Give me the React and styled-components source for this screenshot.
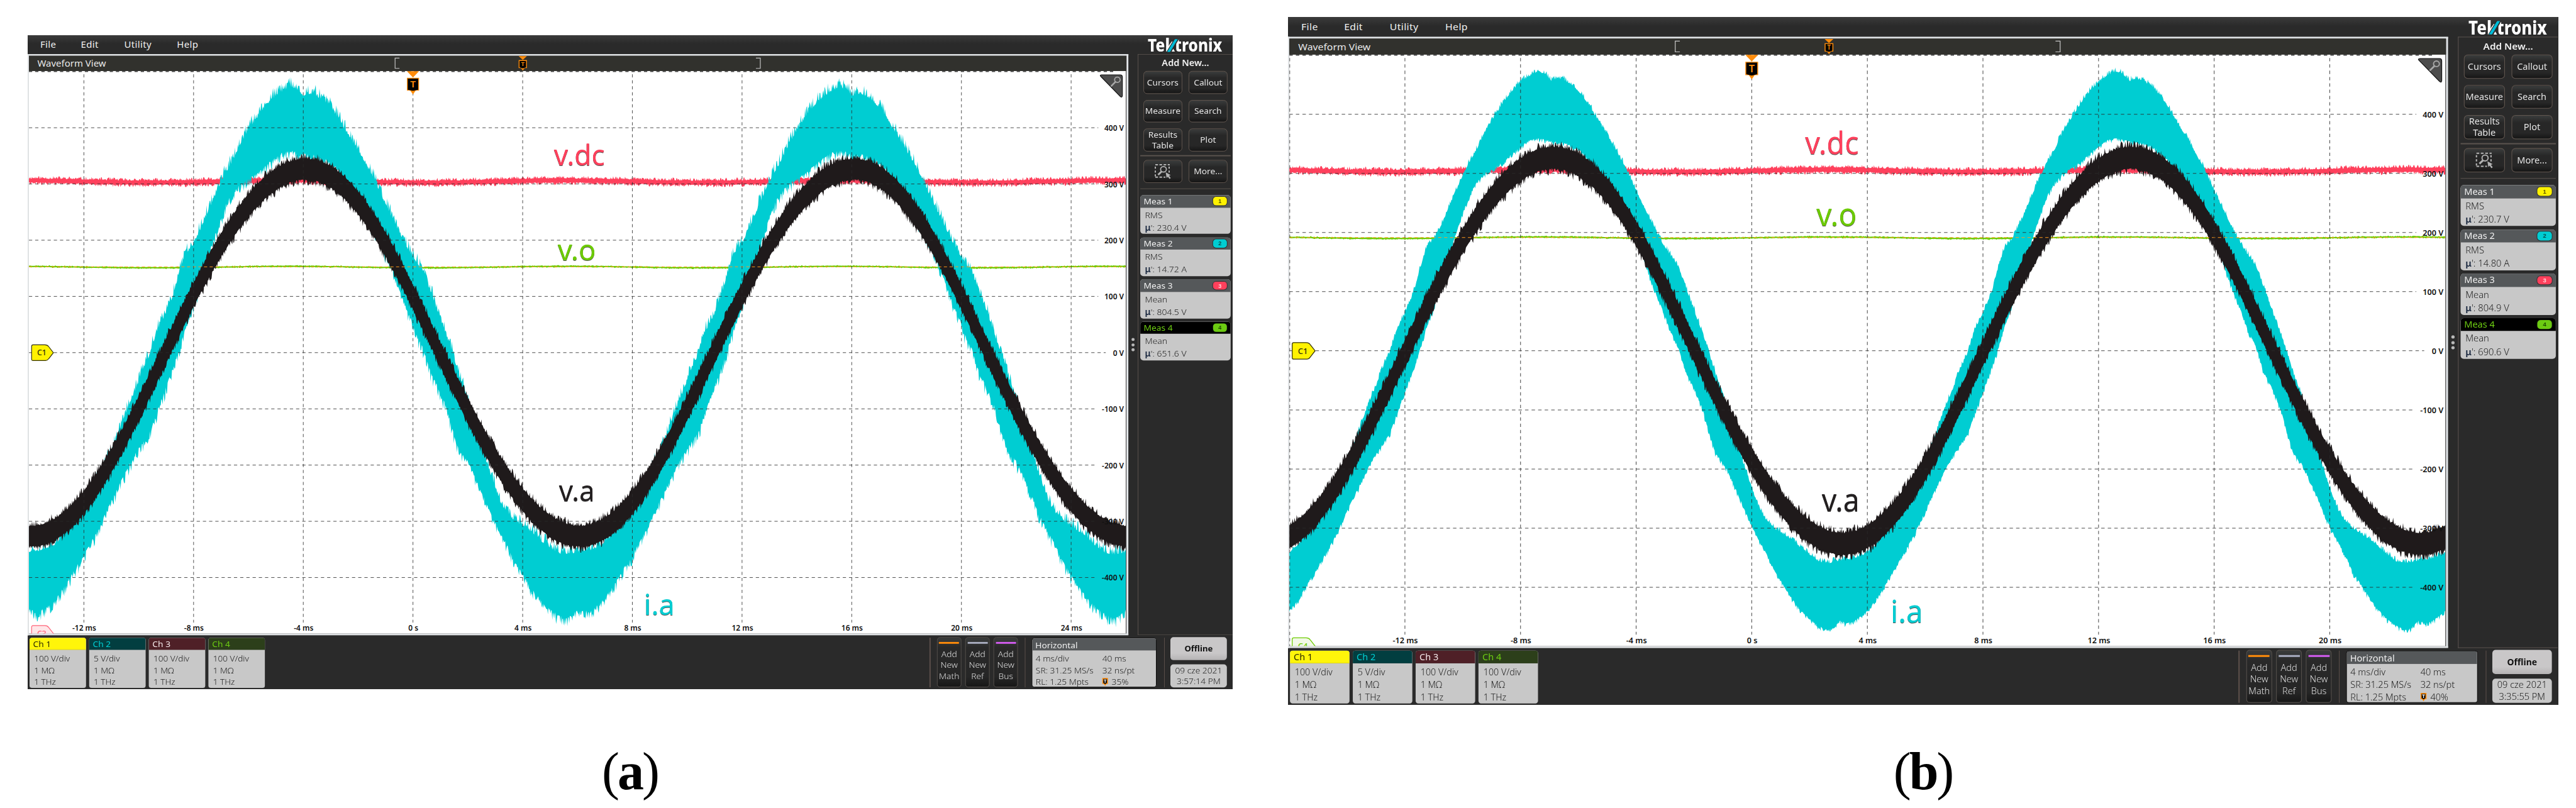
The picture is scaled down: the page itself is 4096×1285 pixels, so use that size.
import { useMemo } from 'react';
import styled, { createGlobalStyle } from 'styled-components';

const GlobalStyle = createGlobalStyle`
    * {
        box-sizing: border-box;
    }
    body {
        margin: 0;
        background: #fff;
        font-family: 'Noto Sans', 'Open Sans', sans-serif;
    }
`;

const Page = styled.main`
    display: flex;
    width: 4096px;
    height: 1285px;
    padding-left: 43.6px;
    gap: 88.6px;
    overflow: hidden;
    background: #fff;
`;

const Figure = styled.figure`
    display: flex;
    flex-direction: column;
    width: ${(p) => 1920 * p.$sx}px;
    margin: 0;
    padding-top: ${(p) => p.$top}px;
    padding-bottom: 12px;
`;

const Caption = styled.figcaption`
    margin-top: auto;
    font-family: 'Liberation Serif', serif;
    font-size: 84px;
    line-height: 92px;
    letter-spacing: -3px;
    text-align: center;
    color: #000;
`;

const ScreenBox = styled.div`
    width: ${(p) => 1920 * p.$sx}px;
    height: ${(p) => 1080 * p.$sy}px;
`;

/* the instrument screen is laid out at its own 1920x1080 */
const Screen = styled.div`
    display: flex;
    flex-direction: column;
    width: 1920px;
    height: 1080px;
    transform: scale(${(p) => p.$sx}, ${(p) => p.$sy});
    transform-origin: 0 0;
    background: #2a2a2a;
    color: #e6e6e6;
    font-size: 13.8px;
    line-height: 18px;
    white-space: nowrap;
`;

const MenuBar = styled.header`
    display: flex;
    justify-content: space-between;
    height: 31px;
    padding: 0 14px 0 20px;
    background: linear-gradient(#3b3b3b, #2a2a2a 14px);
`;

const Menu = styled.nav`
    display: flex;
    font-size: 15px;
    line-height: 31px;
    letter-spacing: 0.35px;
    color: #f0f0f0;
`;

const MenuItem = styled.span`
    width: ${(p) => p.$width}px;
`;

const Logo = styled.svg`
    width: 122px;
    height: 31px;
    overflow: visible;
`;

const Middle = styled.div`
    display: flex;
    height: 960px;
`;

const View = styled.section`
    display: flex;
    flex-direction: column;
    width: 1754px;
    border-top: 3.5px solid #dfe2e4;
    border-left: 2.5px solid #dfe2e4;
    border-right: 3.5px solid #e4e7ea;
    border-bottom: 3px solid #dfe2e4;
`;

const ViewHeader = styled.div`
    position: relative;
    height: 24.5px;
    padding-left: 13.5px;
    background: #31312d;
    font-size: 15px;
    line-height: 25px;
    color: #e8e8e8;
`;

const HeaderMarks = styled.svg`
    position: absolute;
    inset: 0;
    width: 1748px;
    height: 24.5px;
`;

const Plot = styled.svg`
    display: block;
    width: 1748px;
    height: 929px;
    background: #fff;
`;

const TraceLabel = styled.text`
    font-size: 48px;
    fill: ${(p) => p.$color};
    filter: drop-shadow(0.6px 1.3px 0 rgba(40, 40, 40, 0.8));
`;

const Grip = styled.div`
    display: flex;
    flex-direction: column;
    align-items: center;
    justify-content: center;
    gap: 3.4px;
    width: 15px;
    height: 960px;
`;

const Dot = styled.i`
    width: 5px;
    height: 5px;
    border-radius: 50%;
    background: #b9b9b9;
`;

const SideBar = styled.aside`
    display: flex;
    flex-direction: column;
    width: 151px;
    padding: 4px 3px 0;
    border: 1px solid #5b534f;
    border-right: none;
`;

const SideTitle = styled.div`
    height: 23px;
    font-size: 14.6px;
    font-weight: 600;
    line-height: 18px;
    text-align: center;
    color: #f2f2f2;
`;

const ButtonGrid = styled.div`
    display: grid;
    grid-template-columns: 62.6px 62.6px;
    gap: 10.2px 9.5px;
    padding: 0 4.6px;
    margin-bottom: ${(p) => p.$after}px;
`;

const Button = styled.button`
    display: flex;
    align-items: center;
    justify-content: center;
    height: 37.5px;
    padding: 0;
    border: 1.2px solid #61564f;
    border-radius: 6px;
    background: linear-gradient(#3a3c3c, #272727 30%, #272727 75%, #161616);
    font: inherit;
    line-height: 18.4px;
    color: #e4e4e4;
`;

const Rule = styled.hr`
    width: 144px;
    height: 1.2px;
    margin: 0 0 ${(p) => p.$after}px;
    border: none;
    background: #5b534f;
`;

const MeasCard = styled.div`
    width: 144px;
    height: 64.5px;
    margin-bottom: 5.1px;
    border-radius: 5px;
    background: #c8c8c8;
    color: #222;
    overflow: hidden;
`;

const MeasHead = styled.div`
    display: flex;
    align-items: center;
    justify-content: space-between;
    height: 20.7px;
    padding: 0 6px 0 5.5px;
    background: ${(p) => (p.$active ? '#000' : '#55585a')};
    color: ${(p) => (p.$active ? '#6ccb12' : '#f0f0f0')};
`;

const Badge = styled.span`
    width: 22px;
    height: 13.6px;
    border-radius: 5px;
    box-shadow: 0 0 0 1px rgba(20, 20, 20, 0.55);
    background: ${(p) => p.$color};
    color: ${(p) => p.$ink};
    font-family: 'Liberation Sans', sans-serif;
    font-size: 9px;
    font-weight: 700;
    line-height: 14px;
    text-align: center;
`;

const MeasLine = styled.div`
    height: 21px;
    padding-left: 7.4px;
    font-size: 14px;
    font-weight: 300;
    line-height: 24px;
`;

const Mu = styled.span`
    font-weight: 600;
    color: #16243c;
`;

const BottomBar = styled.footer`
    display: flex;
    height: 89px;
    padding: 3.6px 9px 0 2.6px;
`;

const Spacer = styled.div`
    flex: ${(p) => (p.$width ? `0 0 ${p.$width}px` : '1')};
`;

const ChannelCard = styled.div`
    width: 90px;
    height: 83.5px;
    margin-right: 5.1px;
    border-radius: 4px;
    background: #c8c8c8;
    color: #222;
    font-size: 13.6px;
    font-weight: 300;
    overflow: hidden;
`;

const ChannelHead = styled.div`
    height: 20px;
    margin-bottom: 4.5px;
    padding-left: 6px;
    border-bottom: 1px solid rgba(0, 0, 0, 0.12);
    background: ${(p) => p.$bg};
    color: ${(p) => p.$color};
    font-size: 13.8px;
    font-weight: 400;
    line-height: 20.5px;
`;

const ChannelLine = styled.div`
    height: 19.6px;
    padding-left: 7.6px;
    line-height: 19.6px;
`;

const Separator = styled.div`
    width: 1.2px;
    height: 82px;
    margin-right: ${(p) => p.$after}px;
    background: #5b4f4a;
`;

const AddButton = styled.button`
    display: flex;
    flex-direction: column;
    align-items: center;
    justify-content: flex-start;
    width: 39.4px;
    height: 83px;
    margin: -0.8px 5.7px 0 0;
    padding: 7.6px 0 0;
    border: 1.2px solid #55504c;
    border-radius: 5px;
    background: linear-gradient(#3a3c3c, #292929 20%, #262626 80%, #171717);
    font: inherit;
    font-weight: 300;
    line-height: 17.9px;
    color: #dedede;
`;

const ColorBar = styled.i`
    width: 32px;
    height: 2.4px;
    margin-bottom: 8.2px;
    background: ${(p) => p.$color};
`;

const HorizontalCard = styled.div`
    width: 199px;
    height: 82.5px;
    margin-right: 12px;
    border: 1px solid #0c0c0c;
    border-radius: 4px;
    background: #c8c8c8;
    color: #222;
    font-weight: 300;
    overflow: hidden;
`;

const HorizontalHead = styled.div`
    height: 20.5px;
    margin-bottom: 3px;
    padding-left: 5px;
    background: #55585a;
    color: #eee;
    font-weight: 400;
    line-height: 21px;
`;

const HorizontalGrid = styled.div`
    display: grid;
    grid-template-columns: 106px auto;
    grid-auto-rows: 19.6px;
    padding-left: 5.6px;
    line-height: 19.6px;
`;

const TriggerCell = styled.span`
    display: flex;
    align-items: center;
    gap: 5px;
`;

const Status = styled.div`
    display: flex;
    flex-direction: column;
    justify-content: space-between;
    width: 90px;
    height: 83px;
    margin-top: -0.4px;
    text-align: center;
    color: #222;
`;

const Offline = styled.div`
    height: 37.4px;
    border-radius: 5px;
    background: linear-gradient(#c9c7c8 70%, #b5b3b4);
    font-size: 13.2px;
    font-weight: 700;
    line-height: 38px;
    color: #111;
`;

const Clock = styled.div`
    height: 37.8px;
    padding-top: 1px;
    border-radius: 5px;
    background: #c8c8c8;
    font-weight: 300;
    line-height: 17.8px;
`;

// envelope of the inductor current over one positive half wave, [x, y]
const OUTER = [
    [218, 402], [229, 374], [240, 332], [248.5, 304], [262, 287], [272, 265.5], [282, 241],
    [291.6, 218], [301.5, 194], [311.4, 173], [324.7, 149], [338, 119], [351, 97.8],
    [364.4, 76], [377.7, 57.6], [391, 44], [404, 34], [417.4, 27], [427, 31], [437, 42],
    [447, 38], [457, 41], [470.4, 50], [483.6, 64], [497, 85], [510, 108], [523.4, 130],
    [536.6, 154], [550, 179], [563, 209.6], [576.4, 238], [589.6, 266], [603, 293.4],
    [616, 314.4], [629.3, 334], [639.3, 363], [649.2, 392], [655, 405],
];
const INNER = [
    [218, 522], [225, 503], [238.6, 462], [248.5, 427], [258.5, 400], [275, 343], [290, 290],
    [304.8, 244.5], [314.7, 217], [324.7, 200], [338, 185], [351, 177], [364.4, 168],
    [377.7, 155], [391, 144], [404, 134], [417.4, 131], [430.6, 134], [444, 137], [457, 138],
    [477, 147], [490, 159], [510, 185], [530, 225], [550, 262], [575, 315], [590, 360],
    [599.5, 386], [609.5, 410], [616, 431], [629.3, 460], [640, 497], [655, 528],
];
const HALF = 437;
const MID = 465.2;

const lookup = (table, x) => {
    let i = 1;
    while (i < table.length - 1 && table[i][0] < x) i += 1;
    const [x0, y0] = table[i - 1];
    const [x1, y1] = table[i];
    return y0 + ((y1 - y0) * (x - x0)) / (x1 - x0);
};

const currentBand = (x, peak) => {
    const shifted = x - peak + 437 - 218;
    const n = Math.floor(shifted / HALF);
    const u = shifted - n * HALF + 218;
    const outer = lookup(OUTER, u);
    const inner = lookup(INNER, u);
    return n % 2 === 0 ? [outer, inner] : [930.4 - inner, 930.4 - outer];
};

// the band gets taller where the wave is steep
const voltageBand = (x, peak) => {
    const a = ((x - peak) * Math.PI) / HALF;
    const y = MID - 303 * Math.cos(a) - 2.5 * Math.sin(3 * a);
    const half = 16.5 + 3 * Math.abs(Math.sin(a));
    return [y - half, y + half];
};

const random = (seed) => {
    let s = seed;
    return () => {
        s = (s * 1664525 + 1013904223) % 4294967296;
        return s / 4294967296;
    };
};

// filled band with ragged edges, one sample per column
const bandPath = (band, amp, seed, power = 2) => {
    const rnd = random(seed);
    const top = [];
    const bottom = [];
    for (let x = 0; x <= 1748; x += 1) {
        const [a, b] = band(x);
        top.push(`${x} ${(a - amp * rnd() ** power).toFixed(1)}`);
        bottom.push(`${x} ${(b + amp * rnd() ** power).toFixed(1)}`);
    }
    return `M${top.join('L')}L${bottom.reverse().join('L')}Z`;
};

const makeTraces = ({ peak, noise, green }) => {
    const ripple = (x) => Math.cos((2 * Math.PI * (x - peak + 20)) / HALF);
    return {
        dc: bandPath((x) => {
            const y = 182.6 - 1.8 * ripple(x);
            return [y - 3, y + 3];
        }, 5, 11),
        out: bandPath((x) => {
            const y = green + 0.4 - 1.2 * ripple(x);
            return [y - 1, y + 1];
        }, 1.2, 23, 3),
        current: bandPath((x) => currentBand(x, peak), noise, 37),
        phase: bandPath((x) => voltageBand(x, peak), 11, 53, 2.4),
    };
};

const scopes = [
    {
        id: 'a', sx: 0.9978, sy: 0.963, top: 55.6, peak: 437, noise: 18, green: 323.5,
        zero: 612, marker: 787, percent: '35%', time: '3:57:14 PM',
        values: ['230.4 V', '14.72 A', '804.5 V', '651.6 V'],
        tag: { text: 'C3', color: '#ff6478', fill: '#ffe6e8' },
        labels: [
            ['v.dc', 836.6, 156, 81, '#ff405c'],
            ['v.o', 842.5, 312.5, 61, '#6ccb00'],
            ['v.a', 844.5, 710.5, 57, '#231f20'],
            ['i.a', 980, 898, 49, '#00cdd2'],
        ],
    },
    {
        id: 'b', sx: 1.0516, sy: 1.0127, top: 27.3, peak: 396, noise: 8, green: 287.3,
        zero: 699.2, marker: 816, percent: '40%', time: '3:35:55 PM',
        values: ['230.7 V', '14.80 A', '804.9 V', '690.6 V'],
        tag: { text: 'C4', color: '#6ccb00', fill: '#f1f9e6' },
        labels: [
            ['v.dc', 780, 156, 81, '#ff405c'],
            ['v.o', 797, 268.5, 61, '#6ccb00'],
            ['v.a', 805, 717, 57, '#231f20'],
            ['i.a', 909, 892.4, 49, '#00cdd2'],
        ],
    },
];

const volts = [400, 300, 200, 100, 0, -100, -200, -300, -400];
const badges = [
    ['#fff200', '#5b5600'],
    ['#00cdd2', '#064a4c'],
    ['#ff405c', '#ffd5da'],
    ['#6ccb12', '#1d4a00'],
];
const channels = [
    ['Ch 1', '#fff50a', '#2b2a00', '100 V/div'],
    ['Ch 2', '#023e40', '#00cdd2', '5 V/div'],
    ['Ch 3', '#4f2027', '#f4e9ea', '100 V/div'],
    ['Ch 4', '#2c3f1a', '#6ccb12', '100 V/div'],
];

const TriggerFlag = ({ x, y, w, h }) => (
    <g transform={`translate(${x} ${y})`}>
        <path d={`M${-w} 0.5h${2 * w}L0 ${h * 0.28}Z`} fill="#ff8c0a" />
        <path
            d={`M${-w} ${h * 0.29}h${2 * w}v${h * 0.54}h${-w * 0.55}L0 ${h}L${-w * 0.45} ${h * 0.83}H${-w}Z`}
            fill="#ff8c0a"
        />
        <path
            d={`M${1.4 - w} ${h * 0.29 + 1.4}h${2 * w - 2.8}v${h * 0.54 - 2.8}L1 ${h * 0.84}H-1L${1.4 - w} ${h * 0.83 - 1.4}Z`}
            fill="#000"
        />
        <text
            y={h * 0.56}
            dy="0.36em"
            textAnchor="middle"
            fontSize={h * 0.4}
            fontWeight="600"
            fill="#ff8c0a"
        >
            T
        </text>
    </g>
);

const ChannelTag = ({ y, text, fill, stroke, ink }) => (
    <g transform={`translate(3.5 ${y})`}>
        <path
            d="M3 0.5H22Q26 0.5 28 3.5L35.5 13.5L28 23.5Q26 26.5 23 26.5H3Q0.8 26.5 0.8 24V3Q0.8 0.5 3 0.5Z"
            fill={fill}
            stroke={stroke}
            strokeWidth="1.2"
        />
        <text x="17" y="18" textAnchor="middle" fontSize="12.5" fontWeight="500" fill={ink}>{text}</text>
    </g>
);

const TekLogo = () => (
    <Logo viewBox="0 0 122 31">
        <text x="1" y="27.3" fontSize="29" fontWeight="800" fill="#fff" textLength="118.5" lengthAdjust="spacingAndGlyphs">
            Tektronix
        </text>
        <path d="M30.5 27.8L43 6H51L38.5 27.8Z" fill="#2a2a2a" />
        <path d="M31.8 27.4L44.2 6.4H48.8L36.6 27.4Z" fill="#00bcd8" />
    </Logo>
);

const ZoomIcon = () => (
    <svg width="28" height="27" viewBox="0 0 28 27" fill="none" stroke="#b4b4b4">
        <path d="M2 2H25M2 22.5H18" strokeWidth="2" strokeDasharray="4.2 2.4" />
        <path d="M2 5V22M24 5V15" strokeWidth="2" strokeDasharray="3.4 3" />
        <circle cx="15" cy="9.5" r="4.6" strokeWidth="1.8" />
        <path d="M12 13L6.5 18.5" strokeWidth="3" />
        <path d="M18.5 14.5L26.5 19L23.8 20.2L26.6 24L24.6 25.4L22 21.6L20 23.6Z" fill="#b4b4b4" stroke="none" />
    </svg>
);

const SmallTrigger = () => (
    <svg width="10" height="14" viewBox="0 0 10 14">
        <path d="M0.5 0.5H9.5V10.5H7L5 13.5L3 10.5H0.5Z" fill="#ff8c0a" />
        <path d="M2 2H8V8.5L5.6 10.5H4.4L2 8.5Z" fill="#111" />
        <path d="M3 3.6H7M5 3.6V8.4" stroke="#fff" strokeWidth="1.2" />
    </svg>
);

const gridEnd = (v) => {
    if (v < 0) return 1698;
    return v === 0 ? 1716 : 1704;
};

const WaveformPlot = ({ scope }) => {
    const traces = useMemo(() => makeTraces(scope), [scope]);
    const columns = [];
    for (let k = -4; k <= 7; k += 1) {
        const x = scope.zero + k * 174.8;
        if (x > -1 && x < 1740) columns.push({ x: Math.max(x, 0.6), ms: k * 4, label: x > 20 });
    }
    return (
        <Plot viewBox="0 0 1748 929">
            <path d={traces.dc} fill="#ff405c" />
            <path d={traces.out} fill="#6ccb00" />
            <path d={traces.current} fill="#00cdd2" />
            <path d={traces.phase} fill="#1f1a1b" />
            <path
                d={`M0 ${scope.green}H1748`}
                stroke="#ff9a1f"
                strokeWidth="1"
                strokeDasharray="5 4"
            />
            <g stroke="#2a2a2a" strokeOpacity="0.85" strokeWidth="1" strokeDasharray="5.2 4.7">
                <path d="M0 1H1730" strokeWidth="1.4" />
                {volts.map((v) => (
                    <path key={v} d={`M0 ${MID - 0.9285 * v}H${gridEnd(v)}`} />
                ))}
                {columns.map((c) => (
                    <path key={c.ms} d={`M${c.x} 5.5V${c.label ? 911 : 929}`} />
                ))}
            </g>
            <g fontSize="12" fontWeight="600" fill="#111">
                {volts.map((v) => (
                    <text key={v} x="1745" y={MID - 0.9285 * v + 5.2} textAnchor="end">{v} V</text>
                ))}
                {columns.filter((c) => c.label).map((c) => (
                    <text key={c.ms} x={c.x + 0.6} y="924.4" textAnchor="middle">
                        {c.ms === 0 ? '0 s' : `${c.ms} ms`}
                    </text>
                ))}
            </g>
            {scope.labels.map(([text, x, y, width, color]) => (
                <TraceLabel key={text} x={x} y={y} textLength={width} lengthAdjust="spacingAndGlyphs" $color={color}>
                    {text}
                </TraceLabel>
            ))}
            <ChannelTag y={451.8} text="C1" fill="#fff200" stroke="#33310a" ink="#33310a" />
            <ChannelTag y={915.5} text={scope.tag.text} fill={scope.tag.fill} stroke={scope.tag.color} ink={scope.tag.color} />
            <TriggerFlag x={scope.zero} y={0} w={9.7} h={39} />
            <path
                d="M1709 6.4H1739Q1742.5 6.4 1742.5 10V41Q1742 45 1739 42L1708 9Q1706 6.8 1709 6.4Z"
                fill="#4c4c4c"
                stroke="#151515"
                strokeWidth="1.2"
            />
            <circle cx="1734.5" cy="14.5" r="4.4" fill="none" stroke="#a8a8a8" strokeWidth="1.8" />
            <path d="M1731.5 18L1725 24.6" stroke="#a8a8a8" strokeWidth="2.6" strokeLinecap="round" />
        </Plot>
    );
};

const Oscilloscope = ({ scope }) => (
    <Screen $sx={scope.sx} $sy={scope.sy}>
        <MenuBar>
            <Menu>
                <MenuItem $width={64.8}>File</MenuItem>
                <MenuItem $width={69}>Edit</MenuItem>
                <MenuItem $width={84}>Utility</MenuItem>
                <MenuItem $width={60}>Help</MenuItem>
            </Menu>
            <TekLogo />
        </MenuBar>
        <Middle>
            <View>
                <ViewHeader>
                    Waveform View
                    <HeaderMarks viewBox="0 0 1748 24.5">
                        <path
                            d="M590.5 3.8H583.5V20.8H590.5M1158.5 3.8H1165.5V20.8H1158.5"
                            fill="none"
                            stroke="#c4c4c4"
                            strokeWidth="1.2"
                        />
                        <TriggerFlag x={scope.marker} y={0} w={6.6} h={24.5} />
                    </HeaderMarks>
                </ViewHeader>
                <WaveformPlot scope={scope} />
            </View>
            <Grip>
                <Dot />
                <Dot />
                <Dot />
            </Grip>
            <SideBar>
                <SideTitle>Add New...</SideTitle>
                <ButtonGrid $after={6.6}>
                    <Button>Cursors</Button>
                    <Button>Callout</Button>
                    <Button>Measure</Button>
                    <Button>Search</Button>
                    <Button>Results<br />Table</Button>
                    <Button>Plot</Button>
                </ButtonGrid>
                <Rule $after={6.6} />
                <ButtonGrid $after={8.8}>
                    <Button><ZoomIcon /></Button>
                    <Button>More...</Button>
                </ButtonGrid>
                <Rule $after={10.2} />
                {scope.values.map((value, i) => (
                    <MeasCard key={value}>
                        <MeasHead $active={i === 3}>
                            Meas {i + 1}
                            <Badge $color={badges[i][0]} $ink={badges[i][1]}>{i + 1}</Badge>
                        </MeasHead>
                        <MeasLine>{i < 2 ? 'RMS' : 'Mean'}</MeasLine>
                        <MeasLine><Mu>μ</Mu>': {value}</MeasLine>
                    </MeasCard>
                ))}
            </SideBar>
        </Middle>
        <BottomBar>
            {channels.map(([name, bg, color, scale]) => (
                <ChannelCard key={name}>
                    <ChannelHead $bg={bg} $color={color}>{name}</ChannelHead>
                    <ChannelLine>{scale}</ChannelLine>
                    <ChannelLine>1 MΩ</ChannelLine>
                    <ChannelLine>1 THz</ChannelLine>
                </ChannelCard>
            ))}
            <Spacer />
            <Separator $after={10.2} />
            <AddButton><ColorBar $color="#ff8c0a" />Add<br />New<br />Math</AddButton>
            <AddButton><ColorBar $color="#a9adc0" />Add<br />New<br />Ref</AddButton>
            <AddButton><ColorBar $color="#d35cf0" />Add<br />New<br />Bus</AddButton>
            <Spacer $width={4.6} />
            <Separator $after={10} />
            <HorizontalCard>
                <HorizontalHead>Horizontal</HorizontalHead>
                <HorizontalGrid>
                    <span>4 ms/div</span>
                    <span>40 ms</span>
                    <span>SR: 31.25 MS/s</span>
                    <span>32 ns/pt</span>
                    <span>RL: 1.25 Mpts</span>
                    <TriggerCell><SmallTrigger />{scope.percent}</TriggerCell>
                </HorizontalGrid>
            </HorizontalCard>
            <Separator $after={9} />
            <Status>
                <Offline>Offline</Offline>
                <Clock>09 cze 2021<br />{scope.time}</Clock>
            </Status>
        </BottomBar>
    </Screen>
);

const App = () => (
    <>
        <GlobalStyle />
        <Page>
            {scopes.map((scope) => (
                <Figure key={scope.id} $sx={scope.sx} $top={scope.top}>
                    <ScreenBox $sx={scope.sx} $sy={scope.sy}>
                        <Oscilloscope scope={scope} />
                    </ScreenBox>
                    <Caption>(<b>{scope.id}</b>)</Caption>
                </Figure>
            ))}
        </Page>
    </>
);

export default App;
